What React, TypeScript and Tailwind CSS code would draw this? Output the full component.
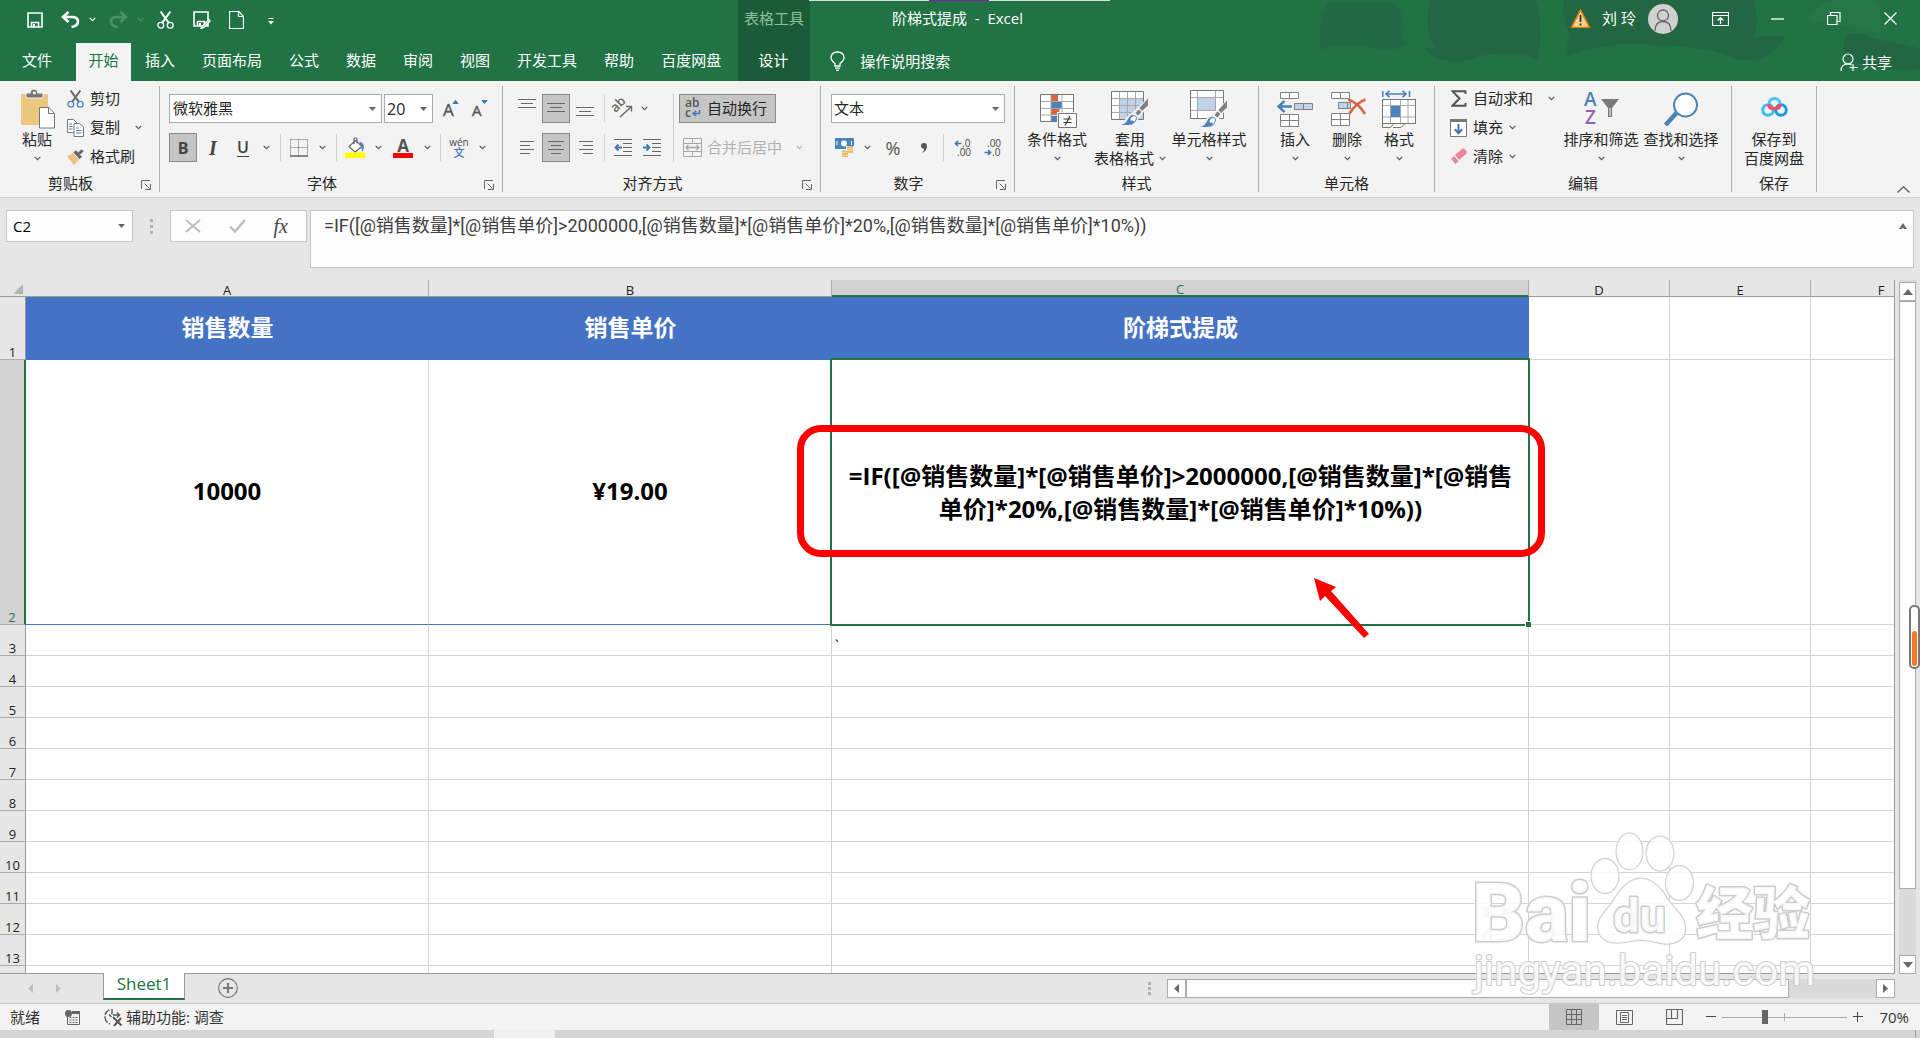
import type { ReactNode } from "react";
import clsx from "clsx";

const tabsBefore = ["插入", "页面布局", "公式", "数据", "审阅", "视图", "开发工具", "帮助", "百度网盘"];

const formula =
  "=IF([@销售数量]*[@销售单价]>2000000,[@销售数量]*[@销售单价]*20%,[@销售数量]*[@销售单价]*10%))";

const columns = ["A", "B", "C", "D", "E", "F"];
const emptyRows = ["3", "4", "5", "6", "7", "8", "9", "10", "11", "12", "13", ""];

/* ---------- small shared pieces ---------- */

function Chevron({ className = "text-[#555]" }: { className?: string }) {
  return (
    <svg viewBox="0 0 7 5" className={clsx("h-[5px] w-[7px] shrink-0", className)} fill="none" stroke="currentColor">
      <path d="M.7.8 3.5 3.6 6.3.8" strokeWidth="1.2" />
    </svg>
  );
}

function Caret() {
  return (
    <svg viewBox="0 0 7 4" className="h-1 w-[7px] shrink-0">
      <path d="M0 0h7L3.5 4z" fill="#666" />
    </svg>
  );
}

function Drop({ label, className = "w-[18px]" }: { label: string; className?: string }) {
  return (
    <button type="button" aria-label={label} className={clsx("flex h-[29px] items-center justify-center", className)}>
      <Chevron />
    </button>
  );
}

function Tool({
  label,
  active,
  className = "w-7",
  children,
}: {
  label: string;
  active?: boolean;
  className?: string;
  children: ReactNode;
}) {
  return (
    <button
      type="button"
      aria-label={label}
      className={clsx(
        "flex h-[29px] items-center justify-center",
        active && "border border-[#8a8a8a] bg-[#c5c5c5]",
        className
      )}
    >
      {children}
    </button>
  );
}

function Split({ className = "w-[10px]" }: { className?: string }) {
  return (
    <div className={clsx("flex h-[27px] justify-center", className)}>
      <div className="w-px bg-[#d0d0d0]" />
    </div>
  );
}

function Group({
  title,
  launcher,
  className,
  children,
}: {
  title: string;
  launcher?: boolean;
  className: string;
  children: ReactNode;
}) {
  return (
    <>
      <section className={clsx("flex shrink-0 flex-col", className)}>
        <div className="flex flex-1 pt-[3px]">{children}</div>
        <div className="flex h-6 items-start">
          <span className="flex-1 text-center leading-5">{title}</span>
          {launcher && (
            <button type="button" aria-label={`${title}设置`} className="flex w-[18px] pt-[7px]">
              <svg viewBox="0 0 10 10" className="size-[10px]" fill="none" stroke="#666">
                <path d="M.5 9V.5H9M3.5 3.5l5 5M9.5 4v5.5H4" />
              </svg>
            </button>
          )}
        </div>
      </section>
      <div className="my-[5px] w-px shrink-0 bg-[#b1b1b1]" />
    </>
  );
}

function BigButton({
  icon,
  label,
  second,
  drop = true,
  className,
}: {
  icon: ReactNode;
  label: string;
  second?: string;
  drop?: boolean;
  className: string;
}) {
  return (
    <button type="button" className={clsx("flex shrink-0 flex-col items-center pt-1", className)}>
      <span className="flex h-[42px] items-center justify-center">{icon}</span>
      <span className="h-[19px] leading-[19px] whitespace-nowrap">{label}</span>
      <span className="flex h-[19px] items-center gap-[5px] leading-[19px] whitespace-nowrap">
        {second}
        {drop && <Chevron />}
      </span>
    </button>
  );
}

function RowButton({ icon, label, children }: { icon: ReactNode; label: string; children?: ReactNode }) {
  return (
    <button type="button" className="flex h-[29px] items-center whitespace-nowrap">
      <span className="mr-[6px] flex w-[17px] justify-center">{icon}</span>
      {label}
      {children}
    </button>
  );
}

function Lines({ rows, y = 0 }: { rows: [number, number][]; y?: number }) {
  return (
    <svg viewBox="0 0 19 29" className="h-[29px] w-[19px]" stroke="#666" strokeWidth="1">
      {rows.map(([x1, x2], i) => (
        <path key={i} d={`M${x1} ${y + 0.5 + i * 4}H${x2}`} />
      ))}
    </svg>
  );
}

/* ---------- icons ---------- */

function ScissorsIcon({ blade, ring }: { blade: string; ring: string }) {
  return (
    <svg viewBox="0 0 17 18" className="h-[18px] w-[17px]" fill="none">
      <path d="M3.6.5 12 12.2M13.4.5 5 12.2" stroke={blade} strokeWidth="2" />
      <circle cx="3.8" cy="14.2" r="2.9" stroke={ring} strokeWidth="1.3" />
      <circle cx="13.2" cy="14.2" r="2.9" stroke={ring} strokeWidth="1.3" />
    </svg>
  );
}

function PasteIcon() {
  return (
    <svg viewBox="0 0 35 40" className="h-10 w-[35px]">
      <path d="M1 5h27v31H1z" fill="#eec77f" />
      <path d="M6 9V4h4.5V2.5Q11 0 14 0t3.5 2.5V4H23v5z" fill="#777" stroke="#f3f3f3" />
      <circle cx="14.3" cy="3.8" r="1.6" fill="#f3f3f3" />
      <path d="M19.5 18.5h9.5l5.5 6v14.5h-15z" fill="#fff" stroke="#777" />
      <path d="M28.5 18.5v6h6" fill="none" stroke="#777" />
    </svg>
  );
}

function CopyIcon() {
  return (
    <svg viewBox="0 0 17 18" className="h-[18px] w-[17px]" fill="#fff" stroke="#777">
      <path d="M.5.5h6L10 4v9.500H.5z" />
      <path d="M7 4.500h5.500L16.500 8v9.500H7z" />
      <path d="M2 5h3M2 7.500h3.500M2 10h3.500M9 9h3M9 11.500h5.500M9 14h5.500" stroke="#4a82bb" />
    </svg>
  );
}

function BrushIcon() {
  return (
    <svg viewBox="0 0 17 16" className="h-4 w-[17px]">
      <path d="M0 7.500 6 4l6 7-5 5z" fill="#eec183" />
      <path d="m6.500 3.500 2.500-2.300 6 6.600-2.500 2.400z" fill="#666" />
      <path d="m11 3.500 3.700-3.300 2 2.200L13 5.500z" fill="#666" />
    </svg>
  );
}

function GrowFont({ up, size }: { up?: boolean; size: number }) {
  return (
    <svg viewBox="0 0 16 20" className="h-5 w-4 overflow-visible">
      <text x="0" y="17" fontSize={size} fontFamily="Open Sans" fill="#555" stroke="#555" strokeWidth=".4">
        A
      </text>
      <path d={up ? "M10 4.500 12.500 1.500l2.500 3z" : "M10 1.500h5l-2.500 3z"} fill="#3f78b5" stroke="#3f78b5" />
    </svg>
  );
}

function BorderIcon() {
  return (
    <svg viewBox="0 0 18 18" className="size-[18px]" fill="none" stroke="#666">
      <path d="M.5.500h17M.5 8.500h17M.5.500v17M8.500.500v17M17.500.500v17" strokeDasharray="1 1" />
      <path d="M0 17h18" strokeWidth="1.500" />
    </svg>
  );
}

function FillIcon() {
  return (
    <svg viewBox="0 0 20 21" className="h-[21px] w-5">
      <path d="M10.500 3.500 17 9.500 10 15 4 9.500z" fill="#fff" stroke="#666" strokeWidth="1.200" />
      <path d="M9 7V2q1.500-2.500 3 0v4" fill="none" stroke="#666" strokeWidth="1.200" />
      <path d="M14.500 4.500q5 1.500 4.300 7l-1.800 3.500q-.5-5-1.500-7z" fill="#4a82bb" />
      <path d="M0 15.500h20V21H0z" fill="#ffff00" />
    </svg>
  );
}

function FontColorIcon() {
  return (
    <svg viewBox="0 0 20 20" className="h-5 w-5 overflow-visible">
      <text x="10" y="13.500" textAnchor="middle" fontSize="17" fontWeight="700" fontFamily="Open Sans" fill="#555">
        A
      </text>
      <path d="M0 15h20v5H0z" fill="#f00" />
    </svg>
  );
}

function OrientationIcon() {
  return (
    <svg viewBox="0 0 20 19" className="h-[19px] w-5 overflow-visible" fill="none" stroke="#666">
      <text
        x="0"
        y="10"
        fontSize="13"
        fontWeight="600"
        fontFamily="Open Sans"
        fill="#666"
        stroke="none"
        transform="rotate(-45 6 9)"
      >
        ab
      </text>
      <path d="M7 18 18 8M18.500 12.500V7.500H13" strokeWidth="1.400" />
    </svg>
  );
}

function IndentIcon({ out }: { out?: boolean }) {
  return (
    <svg viewBox="0 0 19 17" className="h-[17px] w-[19px]" fill="none">
      <path d="M0 .5h18M9 4.500h9M9 8.500h9M9 12.500h9M0 16.500h18" stroke="#666" />
      <path
        d={out ? "M8 8.500H2M4.500 5.500l-3 3 3 3" : "M0 8.500h6M3.500 5.500l3 3-3 3"}
        stroke="#3f78b5"
        strokeWidth="1.800"
      />
    </svg>
  );
}

function WrapIcon() {
  return (
    <svg viewBox="0 0 16 20" className="h-5 w-4 overflow-visible" fontSize="12" fontWeight="600" fontFamily="Open Sans" fill="#555">
      <text x="0" y="8">
        ab
      </text>
      <text x="0" y="18">
        c
      </text>
      <path d="M14.500 11v3.500H9M11 12l-2.800 2.500L11 17" fill="none" stroke="#3f78b5" strokeWidth="1.500" />
    </svg>
  );
}

function MergeIcon() {
  return (
    <svg viewBox="0 0 19 19" className="size-[19px]" fill="none" stroke="#aaa5a8">
      <path d="M.5.500h18v18H.5zM.5 5.500h18M.5 13.500h18M9.500.500v5M9.500 13.500v5" />
      <path d="M3 9.500h13M5.500 7 3 9.500 5.500 12M13.500 7 16 9.500 13.500 12" strokeWidth="1.300" />
    </svg>
  );
}

function MoneyIcon() {
  return (
    <svg viewBox="0 0 19 19" className="size-[19px]">
      <path d="M0 0h19v11H0z" fill="#4a82bb" />
      <circle cx="9" cy="5.500" r="3" fill="#fff" />
      <path d="M2 3v4M16.500 3v4" stroke="#fff" />
      <path d="M11 8h8v8h-5v3H6v-6h5z" fill="#f3f3f3" />
      <path d="M12 9h6M12 11.500h6M12 14h6M7 13.500h5M7 16h6M7 18.500h6" stroke="#e9b96a" strokeWidth="1.800" />
    </svg>
  );
}

function DecimalIcon({ more }: { more?: boolean }) {
  return (
    <svg viewBox="0 0 17 18" className="h-[18px] w-[17px] overflow-visible" fontFamily="Open Sans" fontSize="10" fill="#444">
      <text x={more ? 8 : 3} y="8">
        {more ? ".0" : ".00"}
      </text>
      <text x={more ? 3 : 8} y="17">
        {more ? ".00" : ".0"}
      </text>
      <path
        d={more ? "M7.500 4.500H2M4 2 1.500 4.500 4 7" : "M.5 13.500H6M4 11l2.500 2.500L4 16"}
        fill="none"
        stroke="#3f78b5"
        strokeWidth="1.700"
      />
    </svg>
  );
}

function CondFormatIcon() {
  return (
    <svg viewBox="0 0 38 36" className="h-9 w-[38px] overflow-visible">
      <g transform="translate(2 2)">
        <path d="M.5 1.500h33v27H.5z" fill="#fff" />
        <path d="M11 2h7v6h-7zM11 16h8.500v6H11z" fill="#dc6340" />
        <path d="M11 9h11v6H11zM11 23h6v5.500h-6z" fill="#4a82bb" />
        <path d="M.5 8.500h33M.5 15.500h33M.5 22h33M11 1.500v27M22 1.500v27" fill="none" stroke="#a8a8a8" />
        <path d="M.5 1.500h33v27H.5z" fill="none" stroke="#777" />
        <path d="M17 19h21v17H17z" fill="#f3f3f3" />
        <path d="M18.500 20.500h18v14h-18z" fill="#fff" stroke="#777" />
        <path d="M23.500 26h8M23.500 29.500h8M30 23l-5 9.500" stroke="#333" strokeWidth="1.200" />
      </g>
    </svg>
  );
}

function TableBrush() {
  return (
    <>
      <path d="m18 24 6-5 14-13v8L28 27l-5 7H9z" fill="#f3f3f3" />
      <path d="m28.500 17 8.500-9.500v7L31 20z" fill="#808080" />
      <path d="m24.500 22 3-3.500 3 2.500-3.500 3.500z" fill="#808080" />
      <path d="M18.500 26q3-3.500 7 0 0 5.500-5.500 7.500z" fill="#fff" stroke="#4a82bb" />
      <path d="M10 34q5-1 7-6 3-4.500 6-3-4 1-4 5 2-1 4.500 0-2 4-8 4z" fill="#4a82bb" />
    </>
  );
}

function TableFormatIcon() {
  return (
    <svg viewBox="0 0 38 36" className="h-9 w-[38px]">
      <path d="M.5.500h32v28H.5z" fill="#fff" />
      <path d="M9 7.500h23.500v21H9z" fill="#bfd2e8" />
      <path d="M.5 7.500h32M.5 14.500h32M.5 21.500h32M8.500.500v28M16.500.500v28M24.500.500v28" stroke="#a8a8a8" />
      <path d="M.5.500h32v28H.5z" fill="none" stroke="#777" />
      <TableBrush />
    </svg>
  );
}

function CellStyleIcon() {
  return (
    <svg viewBox="0 0 38 39" className="h-[39px] w-[38px]">
      <path d="M.5.500h33v28H.5z" fill="#fff" />
      <path d="M8 7.500h17v13H8z" fill="#bfd2e8" />
      <path d="M.5 7.500h33M.5 20.500h33M7.500.500v28M25.500.500v28" stroke="#a8a8a8" />
      <path d="M.5.500h33v28H.5z" fill="none" stroke="#777" />
      <g transform="translate(0 3)">
        <TableBrush />
      </g>
    </svg>
  );
}

function InsertIcon() {
  return (
    <svg viewBox="0 0 36 36" className="size-9" fill="#fff" stroke="#808080">
      <path d="M3.500 1.500h18v6h-18zM12.500 1.500v6M3.500 23.500h18v12h-18zM3.500 29.500h18M12.500 23.500v12" />
      <path d="M17.500 12.500h18v6h-18zM26.500 12.500v6" fill="#bfd2e8" />
      <path d="M15 15.500H2M7.500 9.800 1.500 15.500l6 5.700" fill="none" stroke="#4a82bb" strokeWidth="2.500" />
    </svg>
  );
}

function DeleteIcon() {
  return (
    <svg viewBox="0 0 36 36" className="size-9 overflow-visible" fill="#fff" stroke="#808080">
      <g transform="translate(2 0)">
        <path d="M.5 1.500h18v6H.5zM9.500 1.500v6M.5 22.500h18v12H.5zM.5 28.500h18M9.500 22.500v12" />
        <path d="M7.500 11.500h12v6h-12zM16.500 11.500v6" fill="#bfd2e8" />
        <path d="M17 8.500q10 3 17 14.500M34.500 8.500q-9 3-16 14" fill="none" stroke="#dc6340" strokeWidth="2.500" />
      </g>
    </svg>
  );
}

function FormatIcon() {
  return (
    <svg viewBox="0 0 35 38" className="h-[38px] w-[35px]" fill="none" stroke="#777">
      <path d="M.5 9.500h33v24H.5z" fill="#fff" />
      <path d="M.5 15.500h33M.5 27h33M8.500 9.500v24M18.500 9.500v24M26 9.500v24" stroke="#a8a8a8" />
      <path d="M.5 9.500h33v24H.5zM.5 33.500v4h8l3-3.500M11 37.500h8l3.500-3.500" />
      <path d="M9 16h9v11H9z" fill="#4a82bb" stroke="none" />
      <path
        d="M.7 1v6M27.500 1v6M4 4h20M7.500.800 4 4l3.500 3.200M20.500.800 24 4l-3.500 3.200"
        stroke="#4a82bb"
        strokeWidth="1.600"
      />
    </svg>
  );
}

function SigmaIcon() {
  return (
    <svg viewBox="0 0 16 17" className="h-[17px] w-4">
      <path d="M14.500 4V1.200H1.500L8.500 8.500 1.500 15.700h13V13" fill="none" stroke="#555" strokeWidth="2" />
    </svg>
  );
}

function FillDownIcon() {
  return (
    <svg viewBox="0 0 17 18" className="h-[18px] w-[17px]">
      <path d="M.5.500h16v17H.5z" fill="#fff" stroke="#777" />
      <path d="M0 0h17v3H0z" fill="#777" />
      <path d="M8.500 5v9M4.800 10.200l3.700 4 3.700-4" fill="none" stroke="#3f78b5" strokeWidth="2" />
    </svg>
  );
}

function EraserIcon() {
  return (
    <svg viewBox="0 0 17 17" className="size-[17px]">
      <path d="m5 7 7.500-6.500H14L16.500 3v2.500L9 12z" fill="#e6859b" />
      <path d="m4 8 4.500 5-3 3L1 11z" fill="#e6859b" />
    </svg>
  );
}

function SortIcon() {
  return (
    <svg viewBox="0 0 35 34" className="h-[34px] w-[35px] overflow-visible" fontFamily="Open Sans" fontSize="19" fontWeight="600">
      <text x="0" y="14" fill="#4a82bb">
        A
      </text>
      <text x="1" y="32" fill="#9463b8">
        Z
      </text>
      <path d="M17 7h18l-7 9v9h-4v-9z" fill="#7a7a7a" />
      <path d="M26 16v8" stroke="#fff" />
    </svg>
  );
}

function FindIcon() {
  return (
    <svg viewBox="0 0 36 35" className="h-[35px] w-9" fill="none" stroke="#4a82bb">
      <path d="M13.500 21 2.500 33" strokeWidth="4.500" />
      <circle cx="22.500" cy="13" r="11.500" fill="#fff" strokeWidth="2" />
    </svg>
  );
}

function NetdiskIcon() {
  return (
    <svg viewBox="0 0 27 21" className="mb-[6px] h-[21px] w-[27px]" fill="none" strokeWidth="3">
      <circle cx="7" cy="14" r="5.300" stroke="#35bff5" />
      <circle cx="20" cy="14" r="5.300" stroke="#1699f0" />
      <path d="M8 8a5.500 5.500 0 0 1 11 0" stroke="#45c3f5" />
      <path d="M8 8q0 4.700 5.500 4.700T19 8" stroke="#f2506c" strokeWidth="3.600" />
    </svg>
  );
}

function DiskShape() {
  return (
    <>
      <path d="M1 1h14v14H1z" strokeWidth="1.600" />
      <path d="M4.500 15v-4.500h7V15" strokeWidth="1.600" />
      <path d="M6 12h2v3H6z" fill="currentColor" stroke="none" />
    </>
  );
}

/* ---------- window header ---------- */

function TitleBar() {
  return (
    <div className="relative flex h-[43px]">
      <div className="flex h-[39px] w-[738px] shrink-0 items-center pl-[27px] text-white">
        <button type="button" aria-label="保存" className="w-4">
          <svg viewBox="0 0 16 16" className="size-4" fill="none" stroke="currentColor">
            <DiskShape />
          </svg>
        </button>
        <button type="button" aria-label="撤消" className="ml-[18px] flex items-center gap-[9px]">
          <svg viewBox="0 0 19 17" className="h-[17px] w-[19px]" fill="none" stroke="currentColor" strokeWidth="2.600">
            <path d="M2 6h9q6 0 6 4.500T10.500 16M7.500 1 2 6l5.500 5" />
          </svg>
          <Chevron className="text-white" />
        </button>
        <button type="button" aria-label="恢复" className="ml-[13px] flex items-center gap-[9px] text-[#4f9069]">
          <svg viewBox="0 0 19 17" className="h-[17px] w-[19px]" fill="none" stroke="currentColor" strokeWidth="2.600">
            <path d="M17 6H8q-6 0-6 4.500T8.500 16M11.500 1 17 6l-5.500 5" />
          </svg>
          <Chevron className="text-[#4f9069]" />
        </button>
        <button type="button" aria-label="剪切" className="ml-[13px]">
          <ScissorsIcon blade="#fff" ring="#fff" />
        </button>
        <button type="button" aria-label="另存为" className="ml-[19px]">
          <svg viewBox="0 0 18 18" className="size-[18px]" fill="none" stroke="currentColor">
            <DiskShape />
            <path d="m16.500 8-7 7.500-1.500 2 3-1 6.500-7" fill="#217346" strokeWidth="1.400" />
          </svg>
        </button>
        <button type="button" aria-label="新建" className="ml-[18px]">
          <svg viewBox="0 0 15 18" className="h-[18px] w-[15px]" fill="none" stroke="currentColor">
            <path d="M.5.500h9.500l4.500 5v12H.5zM9.500.500v5h5" strokeWidth="1.200" />
          </svg>
        </button>
        <button type="button" aria-label="自定义快速访问工具栏" className="ml-[24px] pt-1">
          <svg viewBox="0 0 6 7" className="h-[7px] w-[6px]" fill="currentColor">
            <path d="M.5 0h5v1h-5zM0 3h6L3 6.500z" />
          </svg>
        </button>
      </div>
      <div className="w-[72px] shrink-0 bg-[#1b5c38] text-center leading-[37px] text-[#8fbf9f]">表格工具</div>
      <h1 className="ml-[82px] leading-9 whitespace-pre text-white">{"阶梯式提成  -  Excel"}</h1>
      <div className="absolute top-0 left-[809px] flex h-px">
        <div className="w-[120px] bg-[#d5e3da]" />
        <div className="w-[60px] bg-[#8b1fa0]" />
        <div className="w-[121px] bg-[#d5e3da]" />
      </div>

      <div className="ml-auto flex h-[37px] items-center pr-[23px] text-white">
        <svg viewBox="0 0 19 19" className="size-[19px]">
          <path d="M9.500 1 18.500 18.500H.5z" fill="#fbd38a" stroke="#e07b10" strokeWidth="1.500" />
          <path d="M9.500 6v7M9.500 14.500v2" stroke="#333" strokeWidth="1.800" />
        </svg>
        <button type="button" className="ml-3 flex items-center gap-3 whitespace-pre">
          刘 玲
          <svg viewBox="0 0 30 30" className="size-[30px]" fill="none" stroke="#666" strokeWidth="1.300">
            <circle cx="15" cy="15" r="15" fill="#d0d0d0" stroke="none" />
            <circle cx="15" cy="11.500" r="5.500" />
            <path d="M7 27q0-9.500 8-9.500t8 9.500" />
          </svg>
        </button>
        <button type="button" aria-label="功能区显示选项" className="ml-[34px]">
          <svg viewBox="0 0 17 14" className="h-[14px] w-[17px]" fill="none" stroke="currentColor">
            <path d="M.5.500h16v13H.5zM.5 3.500h16M8.500 12V6M5.500 8.500l3-3 3 3" strokeWidth="1.200" />
          </svg>
        </button>
        <button type="button" aria-label="最小化" className="ml-[42px]">
          <svg viewBox="0 0 13 13" className="size-[13px]" stroke="currentColor">
            <path d="M0 7h13" strokeWidth="1.300" />
          </svg>
        </button>
        <button type="button" aria-label="还原" className="ml-[43px]">
          <svg viewBox="0 0 14 13" className="h-[13px] w-[14px]" fill="none" stroke="currentColor">
            <path d="M.5 3.500h9.500v9H.5zM3.500 3.500v-3h9.500v9h-3" strokeWidth="1.200" />
          </svg>
        </button>
        <button type="button" aria-label="关闭" className="ml-[43px]">
          <svg viewBox="0 0 13 13" className="size-[13px]" stroke="currentColor">
            <path d="m.5.500 12 12M12.500.500l-12 12" strokeWidth="1.300" />
          </svg>
        </button>
      </div>
    </div>
  );
}

function TabBar() {
  return (
    <nav className="relative flex h-[38px] text-white">
      <button type="button" className="w-[76px] pr-[2px] pb-[3px]">
        文件
      </button>
      <button type="button" className="w-[55px] bg-[#f3f3f3] pb-[3px] text-[#217346]">
        开始
      </button>
      {tabsBefore.map((tab) => (
        <button key={tab} type="button" className="shrink-0 pr-[13px] pb-[3px] pl-[14px] whitespace-nowrap">
          {tab}
        </button>
      ))}
      <button type="button" className="ml-1 w-[72px] shrink-0 bg-[#1b5c38] pr-[2px] pb-[3px]">
        设计
      </button>
      <button type="button" className="ml-5 flex items-center gap-[15px] pb-[2px] whitespace-nowrap">
        <svg viewBox="0 0 15 20" className="h-5 w-[15px]" fill="none" stroke="currentColor" strokeWidth="1.300">
          <path d="M5 15v-2.500Q1 9.500 1 6.500 1.500 1 7.500 1T14 6.500q0 3-4 6V15zM5 17.200h5M6 19.300h3" />
        </svg>
        操作说明搜索
      </button>
      <button type="button" className="mr-[28px] ml-auto flex items-center gap-1">
        <svg viewBox="0 0 18 19" className="h-[19px] w-[18px]" fill="none" stroke="currentColor" strokeWidth="1.200">
          <circle cx="8" cy="6" r="5" />
          <path d="M1 18q0-7 7-7 2 0 3.500 1M13 11v7M9.500 14.500h8" />
        </svg>
        共享
      </button>
    </nav>
  );
}

function Header() {
  return (
    <header className="relative shrink-0 bg-[#217346]">
      <svg viewBox="0 0 600 81" className="absolute top-0 right-0 h-[81px] w-[600px]" fill="#246641">
        <path d="M8 3H75q15 22 6 38 8-1 7 2-9 9-30 6-32-9-58 1Q-3 20 8 3z" opacity=".7" />
        <path d="M110 0h106q8 30 2 60-30-14-70 0-28 6-44-11 8-2 11 0-12-20-5-49z" opacity=".9" />
        <path d="M244 0h190q6 20 0 38 10-4 31-1-14 26-46 23-30-14-86-15-40-5-88 12 3-14 4-25-8-16-5-32z" opacity=".9" />
        <path d="M524 42q0-10 15-9 20 8 48 12l13 4v20q-35 2-60-5-18-8-16-22z" opacity=".9" />
        <path d="M488 20q10-20 30-20h36q12 14 6 34-30-8-72-14z" fill="#257748" />
      </svg>
      <TitleBar />
      <TabBar />
    </header>
  );
}

/* ---------- ribbon ---------- */

function Ribbon() {
  return (
    <div className="flex h-[117px] shrink-0 border-b border-[#d2d2d2] bg-[#f3f3f3] text-[#262626]">
      <Group title="剪贴板" launcher className="w-[159px]">
        <BigButton icon={<PasteIcon />} label="粘贴" className="ml-3 w-[50px]" />
        <div className="ml-[5px]">
          <RowButton icon={<ScissorsIcon blade="#6a6a6a" ring="#4a82bb" />} label="剪切" />
          <RowButton icon={<CopyIcon />} label="复制">
            <span className="ml-[15px] flex">
              <Chevron />
            </span>
          </RowButton>
          <RowButton icon={<BrushIcon />} label="格式刷" />
        </div>
      </Group>

      <Group title="字体" launcher className="w-[342px]">
        <div className="flex flex-col gap-[10px] pt-[10px] pl-[9px]">
          <div className="flex">
            <label className="flex h-[29px] w-[213px] items-center border border-[#ababab] bg-white pr-[5px] pl-[3px]">
              <select aria-label="字体" className="h-full flex-1 appearance-none bg-transparent">
                <option>微软雅黑</option>
              </select>
              <Caret />
            </label>
            <label className="ml-[2px] flex h-[29px] w-[49px] items-center border border-[#ababab] bg-white pr-[5px] pl-[2px]">
              <select aria-label="字号" className="h-full w-7 flex-1 appearance-none bg-transparent text-base">
                <option>20</option>
              </select>
              <Caret />
            </label>
            <Tool label="增大字号" className="ml-[3px] w-[29px]">
              <GrowFont up size={17} />
            </Tool>
            <Tool label="减小字号" className="w-[29px]">
              <GrowFont size={15} />
            </Tool>
          </div>
          <div className="flex items-center">
            <Tool label="加粗" active>
              <span className="text-base font-bold text-[#444]">B</span>
            </Tool>
            <Tool label="倾斜" className="w-8">
              <span className="font-['Liberation_Serif',serif] text-xl leading-5 font-bold text-[#444] italic">I</span>
            </Tool>
            <Tool label="下划线">
              <span className="border-b border-[#444] text-base leading-[18px] font-semibold text-[#444]">U</span>
            </Tool>
            <Drop label="下划线选项" />
            <Split />
            <Tool label="边框">
              <BorderIcon />
            </Tool>
            <Drop label="边框选项" />
            <Split />
            <Tool label="填充颜色">
              <FillIcon />
            </Tool>
            <Drop label="填充颜色选项" />
            <Tool label="字体颜色" className="w-8">
              <FontColorIcon />
            </Tool>
            <Drop label="字体颜色选项" className="w-4" />
            <Split />
            <Tool label="拼音">
              <span className="flex flex-col items-center">
                <span className="text-[10px] leading-[10px] text-[#444]">wén</span>
                <span className="text-[11px] leading-[12px] font-medium text-[#3f78b5]">文</span>
              </span>
            </Tool>
            <Drop label="拼音选项" />
          </div>
        </div>
      </Group>

      <Group title="对齐方式" launcher className="w-[317px]">
        <div className="flex flex-col gap-[10px] pt-[10px] pl-[10px]">
          <div className="flex items-center gap-px">
            <Tool label="顶端对齐">
              <Lines y={5} rows={[[0, 18], [3, 15], [0, 18]]} />
            </Tool>
            <Tool label="垂直居中" active>
              <Lines y={9} rows={[[0, 18], [3, 15], [0, 18]]} />
            </Tool>
            <Tool label="底端对齐">
              <Lines y={13} rows={[[0, 18], [3, 15], [0, 18]]} />
            </Tool>
            <Split className="w-2" />
            <Tool label="方向">
              <OrientationIcon />
            </Tool>
            <Drop label="方向选项" className="w-3" />
          </div>
          <div className="flex items-center gap-px">
            <Tool label="左对齐">
              <Lines y={8} rows={[[2, 16], [2, 12], [2, 16], [2, 12]]} />
            </Tool>
            <Tool label="居中" active>
              <Lines y={8} rows={[[1, 17], [4, 14], [1, 17], [4, 14]]} />
            </Tool>
            <Tool label="右对齐">
              <Lines y={8} rows={[[3, 17], [7, 17], [3, 17], [7, 17]]} />
            </Tool>
            <Split className="w-2" />
            <Tool label="减少缩进量">
              <IndentIcon out />
            </Tool>
            <Tool label="增加缩进量">
              <IndentIcon />
            </Tool>
          </div>
        </div>
        <div className="mt-[9px] ml-[7px] h-[69px] w-px bg-[#d0d0d0]" />
        <div className="flex flex-col items-start gap-[10px] pt-[10px] pl-[5px]">
          <button
            type="button"
            className="flex h-[29px] items-center gap-[6px] border border-[#8a8a8a] bg-[#c5c5c5] pr-[8px] pl-[5px] whitespace-nowrap"
          >
            <WrapIcon />
            自动换行
          </button>
          <button type="button" className="flex h-[29px] items-center gap-[5px] pl-1 whitespace-nowrap text-[#b1b1b1]">
            <MergeIcon />
            合并后居中
            <span className="ml-[9px] flex">
              <Chevron className="text-[#b1b1b1]" />
            </span>
          </button>
        </div>
      </Group>

      <Group title="数字" launcher className="w-[193px]">
        <div className="flex flex-col gap-[10px] pt-[10px] pl-[10px]">
          <label className="flex h-[29px] w-[174px] items-center border border-[#ababab] bg-white pr-[5px] pl-[2px]">
            <select aria-label="数字格式" className="h-full flex-1 appearance-none bg-transparent">
              <option>文本</option>
            </select>
            <Caret />
          </label>
          <div className="flex items-center">
            <Tool label="会计数字格式" className="w-[27px]">
              <MoneyIcon />
            </Tool>
            <Drop label="会计数字格式选项" />
            <Tool label="百分比样式" className="w-[34px]">
              <span className="text-lg text-[#555]">%</span>
            </Tool>
            <Tool label="千位分隔样式">
              <svg viewBox="0 0 8 10" className="h-[10px] w-2">
                <path d="M1 3a3 3 0 1 1 6 0Q7 8 2 10q2.500-2.500 2-4.200A3 3 0 0 1 1 3z" fill="#555" />
              </svg>
            </Tool>
            <Split />
            <Tool label="增加小数位数">
              <DecimalIcon more />
            </Tool>
            <Tool label="减少小数位数" className="ml-[2px] w-7">
              <DecimalIcon />
            </Tool>
          </div>
        </div>
      </Group>

      <Group title="样式" className="w-[243px]">
        <BigButton icon={<CondFormatIcon />} label="条件格式" className="ml-[6px] w-[72px]" />
        <BigButton icon={<TableFormatIcon />} label="套用" second="表格格式" className="w-[74px]" />
        <BigButton icon={<CellStyleIcon />} label="单元格样式" className="w-[84px]" />
      </Group>

      <Group title="单元格" className="w-[175px]">
        <BigButton icon={<InsertIcon />} label="插入" className="ml-[10px] w-[52px]" />
        <BigButton icon={<DeleteIcon />} label="删除" className="w-[52px]" />
        <BigButton icon={<FormatIcon />} label="格式" className="w-[52px]" />
      </Group>

      <Group title="编辑" className="w-[296px]">
        <div className="ml-[15px] w-[111px]">
          <RowButton icon={<SigmaIcon />} label="自动求和">
            <span className="ml-[15px] flex">
              <Chevron />
            </span>
          </RowButton>
          <RowButton icon={<FillDownIcon />} label="填充">
            <span className="ml-[6px] flex">
              <Chevron />
            </span>
          </RowButton>
          <RowButton icon={<EraserIcon />} label="清除">
            <span className="ml-[6px] flex">
              <Chevron />
            </span>
          </RowButton>
        </div>
        <BigButton icon={<SortIcon />} label="排序和筛选" className="w-20" />
        <BigButton icon={<FindIcon />} label="查找和选择" className="w-20" />
      </Group>

      <Group title="保存" className="w-[84px]">
        <BigButton icon={<NetdiskIcon />} label="保存到" second="百度网盘" drop={false} className="w-[84px]" />
      </Group>

      <button type="button" aria-label="折叠功能区" className="mt-auto mr-[10px] mb-1 ml-auto">
        <svg viewBox="0 0 13 7" className="h-[7px] w-[13px]" fill="none" stroke="#555">
          <path d="M.5 6.500 6.500.800l6 5.700" strokeWidth="1.200" />
        </svg>
      </button>
    </div>
  );
}

function FormulaBar() {
  return (
    <div className="flex h-[82px] shrink-0 pt-3 pr-[6px] pl-[6px]">
      <label className="flex h-8 w-[127px] shrink-0 items-center border border-[#c6c6c6] bg-[#fdfdfd] pr-[7px] pl-[6px]">
        <input aria-label="名称框" defaultValue="C2" className="w-full min-w-0 bg-transparent outline-none" />
        <Caret />
      </label>
      <div className="ml-[17px] flex h-8 flex-col justify-center gap-[3px]">
        <span className="size-[3px] bg-[#b0b0b0]" />
        <span className="size-[3px] bg-[#b0b0b0]" />
        <span className="size-[3px] bg-[#b0b0b0]" />
      </div>
      <div className="mr-[3px] ml-[17px] flex h-8 w-[137px] shrink-0 items-center justify-between border border-[#c6c6c6] bg-[#fdfdfd] px-[14px]">
        <button type="button" aria-label="取消">
          <svg viewBox="0 0 16 14" className="h-[14px] w-4" stroke="#bdbdbd" strokeWidth="1.900">
            <path d="m1 1 14 12M15 1 1 13" />
          </svg>
        </button>
        <button type="button" aria-label="输入">
          <svg viewBox="0 0 17 14" className="h-[14px] w-[17px]" fill="none" stroke="#bdbdbd" strokeWidth="2.400">
            <path d="m1 7.500 5 5L16 1" />
          </svg>
        </button>
        <button type="button" className="pr-1 font-['Liberation_Serif',serif] text-xl leading-5 text-[#444] italic">
          fx
        </button>
      </div>
      <div className="flex h-[58px] flex-1 border border-[#c6c6c6] bg-[#fdfdfd]">
        <textarea
          aria-label="编辑栏"
          defaultValue={formula}
          className="h-full flex-1 resize-none overflow-hidden bg-transparent pt-[2px] pl-[13px] font-['Roboto','Noto_Sans_CJK_SC',sans-serif] text-lg leading-[26px] text-[#404040] outline-none"
        />
        <svg viewBox="0 0 8 6" className="mt-3 mr-[6px] h-[6px] w-2">
          <path d="M4 0l4 6H5L4 4.500 3 6H0z" fill="#666" />
        </svg>
      </div>
    </div>
  );
}

/* ---------- sheet ---------- */

function RowHead({ label, selected }: { label: string; selected?: boolean }) {
  return (
    <th
      scope="row"
      className={clsx(
        "border-b border-b-[#ababab] p-0 text-center align-bottom text-[13px] leading-[14px] font-normal",
        selected
          ? "border-r-2 border-r-[#217346] bg-[#d2d2d2] text-[#217346]"
          : "border-r border-r-[#9b9b9b] bg-[#e6e6e6] text-[#222]"
      )}
    >
      {label}
    </th>
  );
}

const cell = "border-r border-b border-[#d4d4d4] p-0";
const headCell = "bg-[#4472c4] p-0 pb-[2px] text-center text-[23px] font-bold text-white";
const dataCell = "border-r border-b border-r-[#d4d4d4] border-b-[#4472c4] p-0 pb-[2px]";

function Sheet() {
  return (
    <div className="flex min-h-0 flex-1">
      <div className="min-w-0 flex-1 overflow-hidden border-r border-b border-[#9b9b9b] bg-white">
        <table className="w-[1952px] table-fixed border-separate border-spacing-0">
          <colgroup>
            <col className="w-[26px]" />
            <col className="w-[403px]" />
            <col className="w-[403px]" />
            <col className="w-[697px]" />
            <col className="w-[141px]" />
            <col className="w-[141px]" />
            <col className="w-[141px]" />
          </colgroup>
          <thead>
            <tr className="h-[17px]">
              <th className="border-b border-[#9b9b9b] bg-[#e6e6e6] p-0 align-bottom">
                <svg viewBox="0 0 10 10" className="mr-[3px] mb-[2px] ml-auto size-[10px]">
                  <path d="M10 0v10H0z" fill="#b4b4b4" />
                </svg>
              </th>
              {columns.map((name) => (
                <th
                  key={name}
                  scope="col"
                  className={clsx(
                    "border-r border-r-[#ababab] p-0 text-[13px] font-normal",
                    name === "C"
                      ? "border-b-2 border-b-[#217346] bg-[#d2d2d2] text-[#217346]"
                      : "border-b border-b-[#9b9b9b] bg-[#e6e6e6] text-[#222]"
                  )}
                >
                  <div className="h-[15px] leading-[18px]">{name}</div>
                </th>
              ))}
            </tr>
          </thead>
          <tbody>
            <tr className="h-[63px]">
              <RowHead label="1" />
              <td className={headCell}>销售数量</td>
              <td className={headCell}>销售单价</td>
              <td className={headCell}>阶梯式提成</td>
              <td className={cell} />
              <td className={cell} />
              <td className={cell} />
            </tr>
            <tr className="h-[265px] text-center text-2xl font-bold text-black">
              <RowHead label="2" selected />
              <td className={dataCell}>10000</td>
              <td className={dataCell}>¥19.00</td>
              <td className="relative p-0 pb-[2px] leading-[33px] whitespace-nowrap">
                =IF([@销售数量]*[@销售单价]&gt;2000000,[@销售数量]*[@销售
                <br />
                单价]*20%,[@销售数量]*[@销售单价]*10%))
                <div className="absolute -top-[2px] -right-px -bottom-px -left-[2px] border-2 border-[#217346]" />
                <div className="absolute -right-[2px] -bottom-[2px] size-[6px] border-t border-l border-white bg-[#217346]" />
                <div className="absolute top-[65px] -right-[16px] -left-[35px] h-[132px] rounded-[24px] border-[7px] border-[#f00]" />
                <svg viewBox="0 0 56 60" className="absolute top-[218px] left-[482px] h-[60px] w-[56px]" fill="#f00">
                  <path d="M0 0 22 9l-5 4L55 56l-5 4L11 18l-5 5z" />
                </svg>
              </td>
              <td className={cell} />
              <td className={cell} />
              <td className={cell} />
            </tr>
            {emptyRows.map((row, i) => (
              <tr key={i} className="h-[31px]">
                <RowHead label={row} />
                {columns.map((name) => (
                  <td key={name} className={clsx(cell, "pl-[3px] text-left align-bottom text-sm leading-[18px]")}>
                    {row === "3" && name === "C" ? "`" : null}
                  </td>
                ))}
              </tr>
            ))}
          </tbody>
        </table>
      </div>

      {/* vertical scroll bar */}
      <div className="mr-1 ml-1 flex w-[17px] flex-col bg-[#dadada] pt-[2px]">
        <button
          type="button"
          aria-label="向上滚动"
          className="flex h-[19px] items-center justify-center border border-[#ababab] bg-white"
        >
          <svg viewBox="0 0 10 6" className="h-[6px] w-[10px]">
            <path d="M5 0l5 6H0z" fill="#666" />
          </svg>
        </button>
        <div className="h-[588px] border border-[#ababab] bg-white" />
        <button
          type="button"
          aria-label="向下滚动"
          className="mt-auto flex h-[19px] items-center justify-center border border-[#ababab] bg-white"
        >
          <svg viewBox="0 0 10 6" className="h-[6px] w-[10px]">
            <path d="M0 0h10L5 6z" fill="#666" />
          </svg>
        </button>
      </div>
    </div>
  );
}

function SheetTabs() {
  return (
    <div className="flex h-[29px] shrink-0">
      <div className="flex h-7 w-[103px] items-center gap-[23px] pl-[28px]">
        <button type="button" aria-label="上一个工作表">
          <svg viewBox="0 0 5 9" className="h-[9px] w-[5px]">
            <path d="M5 0v9L0 4.500z" fill="#bdbdbd" />
          </svg>
        </button>
        <button type="button" aria-label="下一个工作表">
          <svg viewBox="0 0 5 9" className="h-[9px] w-[5px]">
            <path d="M0 0v9l5-4.500z" fill="#bdbdbd" />
          </svg>
        </button>
      </div>
      <button
        type="button"
        className="-mt-px h-[27px] w-[82px] border-x border-b-2 border-x-[#9b9b9b] border-b-[#217346] bg-white pb-[3px] text-[17px] leading-[22px] text-[#217346]"
      >
        Sheet1
      </button>
      <button type="button" aria-label="新工作表" className="ml-[33px] h-7">
        <svg viewBox="0 0 20 20" className="size-5" fill="none" stroke="#777">
          <circle cx="10" cy="10" r="9.300" strokeWidth="1.200" />
          <path d="M10 5v10M5 10h10" strokeWidth="2" />
        </svg>
      </button>
      <div className="mr-[25px] ml-auto flex h-7 items-center">
        <div className="mr-4 flex flex-col gap-[2px]">
          <span className="size-[3px] bg-[#b0b0b0]" />
          <span className="size-[3px] bg-[#b0b0b0]" />
          <span className="size-[3px] bg-[#b0b0b0]" />
        </div>
        <div className="flex h-[19px] w-[728px] bg-[#dadada]">
          <button
            type="button"
            aria-label="向左滚动"
            className="flex w-[19px] items-center justify-center border border-[#ababab] bg-white"
          >
            <svg viewBox="0 0 5 9" className="h-[9px] w-[5px]">
              <path d="M5 0v9L0 4.500z" fill="#666" />
            </svg>
          </button>
          <div className="w-[603px] border border-[#ababab] bg-white" />
          <button
            type="button"
            aria-label="向右滚动"
            className="ml-auto flex w-[19px] items-center justify-center border border-[#ababab] bg-white"
          >
            <svg viewBox="0 0 5 9" className="h-[9px] w-[5px]">
              <path d="M0 0v9l5-4.500z" fill="#666" />
            </svg>
          </button>
        </div>
      </div>
    </div>
  );
}

function Watermark() {
  return (
    <svg
      viewBox="0 0 355 175"
      className="pointer-events-none absolute right-[95px] bottom-0 h-[175px] w-[355px] overflow-visible"
      fill="#fff"
      fillOpacity=".85"
      stroke="#cdcdcd"
      strokeWidth="3"
      strokeLinejoin="round"
      paintOrder="stroke"
      fontFamily="Roboto"
    >
      <text x="2" y="113" fontSize="82" fontWeight="900">
        Bai
      </text>
      <g strokeWidth="2">
        <ellipse cx="135" cy="48" rx="13.500" ry="17" />
        <ellipse cx="159.500" cy="23.500" rx="13" ry="18" />
        <ellipse cx="190" cy="25.500" rx="13.500" ry="17" />
        <ellipse cx="209.500" cy="55" rx="13.500" ry="17" />
        <path d="M149 64q22-27 44 0 7 12 16 21 10 13 4 24-9 10-27 5-15-4-30 0-20 3-26-7-5-11 3-21 9-10 16-22z" />
      </g>
      <text x="143" y="104" fontSize="47" fontWeight="700">
        du
      </text>
      <text x="226" y="106" fontSize="57" fontWeight="900" fontFamily="Noto Sans CJK SC">
        经验
      </text>
      <text x="4" y="157" fontSize="42" strokeWidth="2">
        jingyan.baidu.com
      </text>
    </svg>
  );
}

function StatusBar() {
  return (
    <footer className="flex h-[27px] shrink-0 items-center border-t border-[#c6c6c6] bg-[#f3f3f3] pl-[10px] text-[#333]">
      <span>就绪</span>
      <button type="button" aria-label="录制宏" className="ml-[25px]">
        <svg viewBox="0 0 15 15" className="size-[15px]" fill="none" stroke="#666">
          <path d="M2.500 6v8.500h12v-13H7" />
          <path d="M7 1h8v3H7z" fill="#666" stroke="none" />
          <circle cx="3.500" cy="3.500" r="3.500" fill="#666" stroke="none" />
          <path d="M4.500 7.500h9M4.500 10h9M4.500 12.500h9" strokeDasharray="2 1" />
        </svg>
      </button>
      <button type="button" className="ml-6 flex items-center gap-[3px] whitespace-nowrap">
        <svg viewBox="0 0 19 18" className="h-[18px] w-[19px]" fill="none" stroke="#555" strokeWidth="1.400">
          <path d="M5.500 1.500q-5 3-4.500 8t5 6.500" strokeDasharray="7 1.500" />
          <path d="M8 1v5.500M5 6.500l2.500 2.500M9 7h6M13 4.500 15.500 7 13 9.500" />
          <path d="m9 9 8.500 8.500M17 10l-7 8" strokeWidth="2" />
        </svg>
        辅助功能: 调查
      </button>

      <div className="ml-auto flex h-full items-center">
        <button
          type="button"
          aria-label="普通"
          className="flex h-full w-[50px] items-center justify-center bg-[#c5c5c5]"
        >
          <svg viewBox="0 0 16 16" className="size-4" fill="none" stroke="#666">
            <path d="M.5.500h15v15H.5zM.5 5.500h15M.5 10.500h15M5.500.500v15M10.500.500v15" />
          </svg>
        </button>
        <button type="button" aria-label="页面布局" className="flex h-full w-[50px] items-center justify-center">
          <svg viewBox="0 0 17 15" className="h-[15px] w-[17px]" fill="none" stroke="#666">
            <path d="M.5.500h16v14H.5zM4.500 2.500h8v10h-8zM6 5.500h5M6 7.500h5M6 9.500h5" />
          </svg>
        </button>
        <button type="button" aria-label="分页预览" className="flex h-full w-[50px] items-center justify-center">
          <svg viewBox="0 0 17 16" className="h-4 w-[17px]" fill="none" stroke="#666">
            <path d="M.5.500h16v15H.5zM5.500.500v9M11.500.500v9H.5" strokeWidth="1.200" />
          </svg>
        </button>
        <button type="button" aria-label="缩小" className="ml-[7px]">
          <svg viewBox="0 0 10 10" className="size-[10px]" stroke="#444">
            <path d="M0 4.500h10" />
          </svg>
        </button>
        <div className="relative mx-[6px] flex h-full w-[125px] items-center">
          <div className="absolute left-[62px] h-2 w-px bg-[#ababab]" />
          <input
            type="range"
            aria-label="缩放"
            min={10}
            max={190}
            defaultValue={70}
            className="relative h-4 w-full appearance-none bg-transparent [&::-webkit-slider-runnable-track]:h-px [&::-webkit-slider-runnable-track]:bg-[#ababab] [&::-webkit-slider-thumb]:-mt-[7px] [&::-webkit-slider-thumb]:h-[14px] [&::-webkit-slider-thumb]:w-[6px] [&::-webkit-slider-thumb]:appearance-none [&::-webkit-slider-thumb]:bg-[#666]"
          />
        </div>
        <button type="button" aria-label="放大">
          <svg viewBox="0 0 10 10" className="size-[10px]" stroke="#444">
            <path d="M0 4.500h10M4.500 0v10" />
          </svg>
        </button>
        <span className="mr-[11px] ml-4">70%</span>
      </div>
    </footer>
  );
}

export default function App() {
  return (
    <div className="relative flex h-screen flex-col overflow-hidden bg-[#e6e6e6] font-['Open_Sans','Noto_Sans_CJK_SC',sans-serif] text-[15px]">
      <Header />
      <Ribbon />
      <FormulaBar />
      <main className="relative flex min-h-0 flex-1 flex-col">
        <Sheet />
        <SheetTabs />
        <Watermark />
      </main>
      <StatusBar />
      <div className="flex h-2 shrink-0 bg-[#d5d5d5]">
        <div className="ml-[494px] w-[61px] bg-[#f0f0f0]" />
        <div className="mr-1 ml-auto w-px bg-[#9b9b9b]" />
      </div>

      {/* floating page marker on the window edge */}
      <div className="absolute top-[605px] right-0 flex h-16 w-[11px] items-end rounded-[5px] border-2 border-[#777] bg-white p-[1px]">
        <div className="h-[35px] w-full rounded-full bg-[#ff7722]" />
      </div>
    </div>
  );
}
